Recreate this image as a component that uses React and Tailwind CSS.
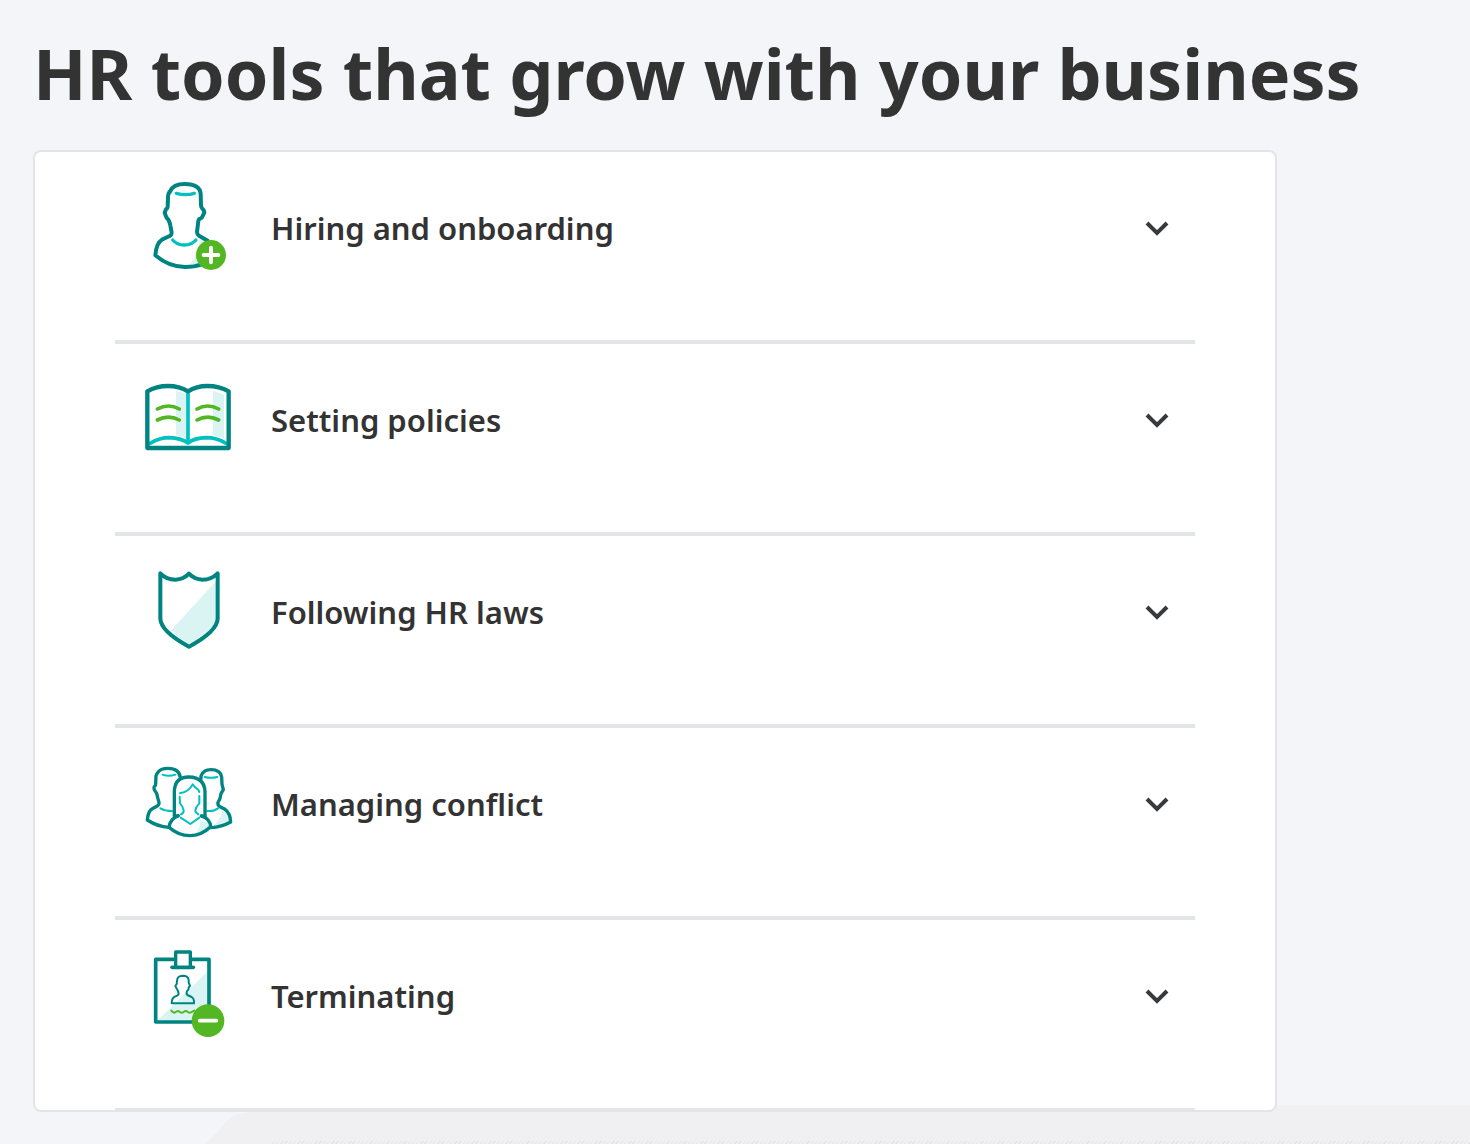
import React from "react";

const teal = "#008481";
const aqua = "#00c1bf";
const pale = "#d9f4f3";
const green = "#53b724";

function Icon({ viewBox, children }) {
  return (
    <svg
      viewBox={viewBox}
      className="h-[110px] w-[110px] shrink-0"
      fill="none"
      strokeLinecap="round"
      strokeLinejoin="round"
      aria-hidden="true"
    >
      {children}
    </svg>
  );
}

function HiringIcon() {
  return (
    <Icon viewBox="0 9 330 330">
      <path d="M166 282 Q182 262 190 232 L194 208 L222 222 L222 286 Z" fill={pale} />
      <path
        d="M218 212 L192 197 Q186 193 186 186 L190 153 Q191 146 196 146 Q201 144 205 134 L208 128 Q208 122 203 117 Q198 113 198 106 L197 72 Q195 42 149 42 Q115 42 106 63 Q99 70 99 82 L98 110 Q98 114 93 118 L89 128 L93 139 Q95 145 100 149 Q105 158 106 166 L110 188 Q110 194 104 198 L82 208 Q63 220 61 256 Q102 291 150 291 Q178 291 200 283"
        stroke={teal}
        strokeWidth="12"
      />
      <path d="M124 70 Q151 78 178 70" stroke={aqua} strokeWidth="10" />
      <path d="M113 210 Q126 225 148 225 Q170 225 183 210" stroke={aqua} strokeWidth="10" />
      <circle cx="228" cy="255" r="45" fill={green} />
      <path d="M228 233 V277 M206 255 H250" stroke="#fff" strokeWidth="12" />
    </Icon>
  );
}

function PoliciesIcon() {
  return (
    <Icon viewBox="0 -15 330 330">
      <path d="M123 62 L157 72 V204 L123 196 Z" fill={pale} />
      <path d="M234 62 L267 74 V205 L234 196 Z" fill={pale} />
      <path d="M45 220 Q75 203 102 203 Q138 204 159 219 Q178 204 213 203 Q245 203 273 220" stroke={aqua} strokeWidth="11" />
      <path d="M159 66 V217" stroke={aqua} strokeWidth="11" />
      <path
        d="M37 234 V64 Q64 48 99 48 Q133 48 159 64 Q184 48 217 48 Q253 48 281 64 V234 Z"
        stroke={teal}
        strokeWidth="13"
      />
      <g stroke={green} strokeWidth="11">
        <path d="M67 117 Q101 99 133 117" />
        <path d="M67 150 Q101 133 133 150" />
        <path d="M186 117 Q218 99 251 117" />
        <path d="M186 150 Q218 133 251 150" />
      </g>
    </Icon>
  );
}

function LawsIcon() {
  return (
    <Icon viewBox="0 -9 330 330">
      <path d="M243 64 V178 Q242 204 162 251 Q132 236 109 210 Z" fill={pale} />
      <path
        d="M76 40 Q94 59 121 59 Q146 58 162 41 Q178 58 203 59 Q229 59 248 40 V176 Q247 214 162 260 Q77 214 76 176 Z"
        stroke={teal}
        strokeWidth="12"
      />
    </Icon>
  );
}

function ConflictIcon() {
  return (
    <Icon viewBox="0 -18 330 330">
      <path d="M240 208 Q259 186 262 168 L279 178 L286 203 Q260 216 236 216 Z" fill={pale} />
      <path
        d="M102 217 Q67 215 37 195 Q39 166 54 160 L67 153 Q73 149 72 142 L67 124 Q66 114 61 109 Q56 104 57 97 Q62 92 62 87 L63 62 Q65 56 69 52 Q76 40 99 40 Q133 40 136 68"
        stroke={teal}
        strokeWidth="10"
      />
      <path
        d="M228 218 Q260 216 287 201 Q286 174 270 163 L255 155 Q247 150 249 142 Q257 130 258 116 L265 104 Q263 96 261 88 L260 66 Q256 44 228 44 Q205 44 198 63 V72"
        stroke={teal}
        strokeWidth="10"
      />
      <path d="M83 59 Q101 66 121 59 M209 66 Q228 71 247 66" stroke={aqua} strokeWidth="6" />
      <path d="M76 160 Q90 168 111 168 M216 168 Q236 170 249 160" stroke={aqua} strokeWidth="6" />
      <path
        d="M118 184 V110 Q119 66 162 66 Q208 67 210 110 V184 Q226 192 227 215 Q198 242 165 242 Q129 242 102 217 Q105 192 130 182"
        fill="#fff"
        stroke="none"
      />
      <path d="M186 231 Q197 211 196 194 L219 203 L223 213 Q207 230 186 235 Z" fill={pale} />
      <path
        d="M118 182 V110 Q119 66 162 66 Q208 67 210 110 V183 M130 182 Q105 192 102 217 Q129 242 165 242 Q198 242 227 215 Q226 192 199 183"
        stroke={teal}
        strokeWidth="10"
      />
      <path d="M118 184 L128 183 M201 183 L210 185" stroke={teal} strokeWidth="10" />
      <path
        d="M135 115 Q162 110 173 88 Q179 98 185 100 Q192 104 193 111 M134 125 L135 145 Q145 155 146 166 Q147 173 138 178 M193 123 L193 145 Q182 156 181 166 Q181 173 190 178 M137 188 L166 207 L193 188"
        stroke={aqua}
        strokeWidth="6"
      />
    </Icon>
  );
}

function TerminatingIcon() {
  return (
    <Icon viewBox="0 3 330 330">
      <path d="M217 95 V243 H66 Z" fill={pale} />
      <path d="M62 58 H222 V246 H62 Z" stroke={teal} strokeWidth="11" />
      <path d="M122 82 V36 H166 V82" fill="#fff" stroke={teal} strokeWidth="10" />
      <path d="M111 82 H175" stroke={teal} strokeWidth="11" />
      <path
        d="M110 190 H177 Q178 176 170 171 L157 165 Q153 161 156 153 Q162 149 161 143 L165 137 L161 128 V120 Q160 107 142 107 Q129 108 127 117 L125 132 L121 138 L125 146 Q130 152 131 162 Q129 166 124 168 Q110 171 110 190 Z"
        stroke={teal}
        strokeWidth="6"
      />
      <path
        d="M109 212 Q115 220 121 217 Q128 211 132 214 Q139 221 146 216 Q152 211 156 214 Q162 220 168 217 L178 212"
        stroke={green}
        strokeWidth="6"
      />
      <circle cx="219" cy="242" r="49" fill={green} />
      <path d="M194 242 H244" stroke="#fff" strokeWidth="11" />
    </Icon>
  );
}

function Chevron() {
  return (
    <svg viewBox="0 0 32 32" className="h-8 w-8 shrink-0" fill="none" aria-hidden="true">
      <path d="M6 11 L16 21 L26 11" stroke="#393a3d" strokeWidth="4" />
    </svg>
  );
}

const sections = [
  { title: "Hiring and onboarding", Art: HiringIcon },
  { title: "Setting policies", Art: PoliciesIcon },
  { title: "Following HR laws", Art: LawsIcon },
  { title: "Managing conflict", Art: ConflictIcon },
  { title: "Terminating", Art: TerminatingIcon },
];

export default function App() {
  return (
    <div className="min-h-screen overflow-hidden bg-[#f4f5f9] font-['Noto_Sans',sans-serif] text-[#333333]">
      <main className="pt-7 pl-[33px]">
        <h1 className="text-[70px] leading-[90px] font-bold">HR tools that grow with your business</h1>
        <div className="relative z-10 mt-8 max-w-[1244px] rounded-lg border-2 border-[#e3e4e8] bg-white px-20">
          <ul className="-mb-0.5">
            {sections.map(({ title, Art }) => (
              <li key={title} className="border-b-4 border-[#e3e5e8] pb-9">
                <button type="button" aria-expanded="false" className="flex h-[152px] w-full items-center pr-[22px] pl-5 text-left">
                  <Art />
                  <span className="ml-[26px] flex-1 text-[31px] leading-10 font-semibold">{title}</span>
                  <Chevron />
                </button>
              </li>
            ))}
          </ul>
        </div>
      </main>
      <div className="-mt-[7px] ml-[205px] flex" aria-hidden="true">
        <svg viewBox="0 0 65 39" className="h-[39px] w-[65px] shrink-0">
          <path d="M0 39 Q8 31 14 26 Q20 16 28 11 Q36 8 46 7 L65 0 V39 Z" fill="#f0f0f2" />
        </svg>
        <div className="flex flex-1 flex-col justify-end bg-[#f0f0f2]">
          <div className="h-[3px] bg-[repeating-linear-gradient(135deg,#e6e6e8_0px,#e6e6e8_1px,#f0f0f2_1px,#f0f0f2_3px)]" />
        </div>
      </div>
    </div>
  );
}
